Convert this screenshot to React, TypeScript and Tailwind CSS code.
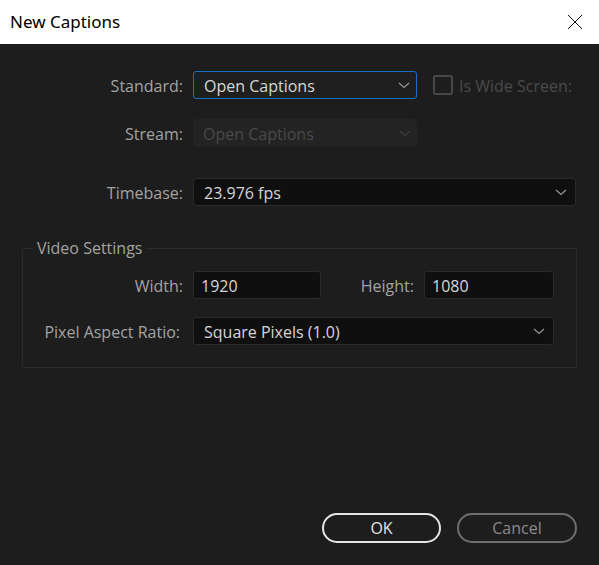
import React from "react";

const Chevron = ({ color = "#9a9a9a" }: { color?: string }) => (
  <svg width="12" height="7" viewBox="0 0 12 7" fill="none">
    <path d="M1 1 L6 5.5 L11 1" stroke={color} strokeWidth="1.1" />
  </svg>
);

export default function App() {
  return (
    <div className="w-[599px] h-[565px] flex flex-col bg-[#1d1d1d] overflow-hidden" style={{ fontFamily: '"Open Sans", "Noto Sans", sans-serif' }}>
      <div className="h-[44px] bg-white flex items-center justify-between pl-[10px] pr-[16px] shrink-0">
        <span className="text-[17px] text-black" style={{ fontFamily: '"Noto Sans", sans-serif' }}>New Captions</span>
        <svg width="16" height="16" viewBox="0 0 16 16" fill="none">
          <path d="M1 1 L15 15 M15 1 L1 15" stroke="#111" strokeWidth="1" />
        </svg>
      </div>
      <div className="flex-1 flex flex-col text-[16px]">
        <div className="flex items-center mt-[27px] h-[28px]">
          <div className="w-[183px] text-right text-[#a3a3a3] pt-[2px]">Standard:</div>
          <div className="ml-[10px] w-[224px] h-[28px] border border-[#1a6fc4] rounded-[3px] bg-[#1f1f1f] flex items-center justify-between pl-[10px] pr-[6px] text-[#d6d6d6]">
            <span className="pt-[2px]">Open Captions</span>
            <Chevron />
          </div>
          <div className="ml-[16px] w-[20px] h-[20px] border-2 border-[#474747] rounded-[2px]" />
          <span className="ml-[6px] text-[#4a4a4a] pt-[2px]">Is Wide Screen:</span>
        </div>
        <div className="flex items-center mt-[20px] h-[28px]">
          <div className="w-[183px] text-right text-[#a3a3a3] pt-[2px]">Stream:</div>
          <div className="ml-[10px] w-[224px] h-[28px] rounded-[3px] bg-[#232323] flex items-center justify-between pl-[10px] pr-[6px] text-[#4a4a4a]">
            <span className="pt-[2px]">Open Captions</span>
            <Chevron color="#3d3d3d" />
          </div>
        </div>
        <div className="flex items-center mt-[31px] h-[28px]">
          <div className="w-[183px] text-right text-[#a3a3a3] pt-[2px]">Timebase:</div>
          <div className="ml-[10px] w-[383px] h-[28px] border border-[#2a2a2a] rounded-[3px] bg-[#0f0f10] flex items-center justify-between pl-[10px] pr-[8px] text-[#d6d6d6]">
            <span className="pt-[2px]">23.976 fps</span>
            <Chevron />
          </div>
        </div>
        <fieldset className="mt-[31px] ml-[22px] w-[555px] border border-[#2c2c2c] rounded-[2px] pb-[22px]">
          <legend className="ml-[10px] px-[4px] text-[#a3a3a3] leading-[22px]">Video Settings</legend>
          <div className="flex items-center mt-[12px] h-[28px]">
            <div className="w-[160px] text-right text-[#a3a3a3] pt-[2px]">Width:</div>
            <div className="ml-[10px] w-[128px] h-[28px] border border-[#2a2a2a] rounded-[3px] bg-[#0f0f10] flex items-center pl-[7px] pt-[2px] text-[#d6d6d6]">1920</div>
            <div className="w-[93px] text-right text-[#a3a3a3] pt-[2px]">Height:</div>
            <div className="ml-[10px] w-[130px] h-[28px] border border-[#2a2a2a] rounded-[3px] bg-[#0f0f10] flex items-center pl-[7px] pt-[2px] text-[#d6d6d6]">1080</div>
          </div>
          <div className="flex items-center mt-[18px] h-[28px]">
            <div className="w-[157px] text-right text-[#a3a3a3] pt-[2px]">Pixel Aspect Ratio:</div>
            <div className="ml-[13px] w-[361px] h-[28px] border border-[#2a2a2a] rounded-[3px] bg-[#0f0f10] flex items-center justify-between pl-[10px] pr-[8px] text-[#d6d6d6]">
              <span className="pt-[2px]">Square Pixels (1.0)</span>
              <Chevron />
            </div>
          </div>
        </fieldset>
        <div className="mt-auto mb-[22px] flex justify-end pr-[22px] gap-[16px]">
          <button className="w-[119px] h-[30px] rounded-full border-2 border-[#e6e6e6] text-[#e6e6e6] bg-transparent">OK</button>
          <button className="w-[120px] h-[30px] rounded-full border-2 border-[#6e6e6e] text-[#8a8a8a] bg-transparent">Cancel</button>
        </div>
      </div>
    </div>
  );
}
